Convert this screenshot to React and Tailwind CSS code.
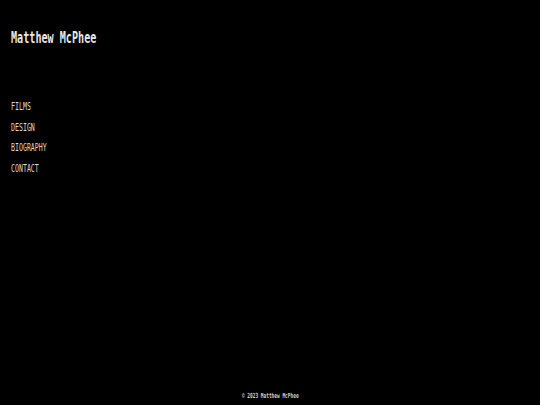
export default function App() {
  const mono = { fontFamily: '"DejaVu Sans Mono", "Liberation Mono", monospace' };
  const items = ["FILMS", "DESIGN", "BIOGRAPHY", "CONTACT"];
  return (
    <div className="flex h-[405px] w-full flex-col bg-black text-[#e8e8e8]" style={mono}>
      <div className="pl-[11px] pt-[29px]">
        <h1 className="origin-left scale-x-[0.675] whitespace-nowrap text-[15px] font-bold leading-[18px]">
          Matthew McPhee
        </h1>
      </div>
      <nav className="mt-[50px] flex flex-col pl-[11px]">
        {items.map((t) => (
          <a key={t} className="origin-left scale-x-[0.66] whitespace-nowrap text-[10px] leading-[20.67px] text-[#d8d8d8]">
            {t}
          </a>
        ))}
      </nav>
      <div className="flex-1" />
      <footer className="flex justify-center pb-[4px]">
        <span className="scale-x-[0.64] whitespace-nowrap text-[7px] leading-[9px] font-bold text-[#cfcfcf]">
          © 2023 Matthew McPhee
        </span>
      </footer>
    </div>
  );
}
